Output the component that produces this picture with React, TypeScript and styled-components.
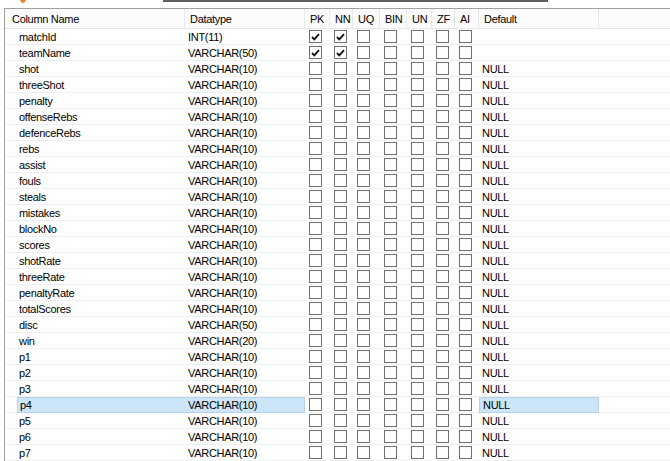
import React from "react";
import styled, { createGlobalStyle, css } from "styled-components";

const Global = createGlobalStyle`
  html, body { margin: 0; padding: 0; background: #ffffff; }
  body { font-family: "Liberation Sans", Arial, sans-serif; font-size: 11px; color: #000; overflow: hidden; }
`;

const COLS = "12px 168px 120px 25px 23px 27px 27px 25px 23px 24px 120px 1fr";

const Page = styled.div`
  width: 670px;
  height: 461px;
  display: flex;
  flex-direction: column;
  overflow: hidden;
`;

const TopStrip = styled.div`
  height: 8px;
  display: flex;
  align-items: flex-start;
`;

const ToolIcon = styled.svg`
  margin-left: 19px;
  width: 8px;
  height: 4px;
  display: block;
`;

const ToolLine = styled.div`
  margin-left: 136px;
  width: 385px;
  height: 2px;
  background: #5f5f5f;
`;

const Panel = styled.div`
  margin-left: 4px;
  border-top: 1px solid #a0a0a0;
  border-left: 1px solid #a0a0a0;
  flex: 1;
  display: flex;
  flex-direction: column;
`;

const HeaderRow = styled.div`
  display: grid;
  grid-template-columns: ${COLS};
  height: 20px;
  box-sizing: border-box;
  border-bottom: 1px solid #e5e5e5;
  background: #fcfcfd;
`;

const HeadCell = styled.div<{ $span?: number; $pad?: number; $last?: boolean }>`
  grid-column: span ${(p) => p.$span ?? 1};
  padding-left: ${(p) => p.$pad ?? 5}px;
  padding-top: 1px;
  line-height: 18px;
  letter-spacing: -0.3px;
  white-space: nowrap;
  overflow: hidden;
  ${(p) => !p.$last && css`border-right: 1px solid #e3e9f1;`}
`;

const Row = styled.div`
  display: grid;
  grid-template-columns: ${COLS};
  height: 16px;
  box-sizing: border-box;
  border-bottom: 1px solid #f0f0f0;
`;

const selBorder = "#b4d2ee";
const selFill = "#cde5f8";

const Cell = styled.div<{ $pad?: number; $sel?: "left" | "right" | "full" }>`
  padding-left: ${(p) => p.$pad ?? 3}px;
  padding-top: 1px;
  line-height: 14px;
  letter-spacing: -0.3px;
  white-space: nowrap;
  overflow: hidden;
  box-sizing: border-box;
  ${(p) =>
    p.$sel &&
    css`
      background: ${selFill};
      border-top: 1px solid ${selBorder};
      border-bottom: 1px solid ${selBorder};
      padding-top: 0px;
      line-height: 14px;
      margin-bottom: -1px;
    `}
  ${(p) => (p.$sel === "left" || p.$sel === "full") && css`border-left: 1px solid ${selBorder};`}
  ${(p) => (p.$sel === "right" || p.$sel === "full") && css`border-right: 1px solid ${selBorder};`}
`;

const BoxCell = styled.div`
  padding-left: 4px;
  padding-top: 1px;
`;

const Box = styled.div`
  width: 13px;
  height: 13px;
  box-sizing: border-box;
  border: 1px solid #6f6f6f;
  background: #fff;
  display: flex;
  align-items: center;
  justify-content: center;
`;

const Check = () => (
  <svg width="9" height="8" viewBox="0 0 9 8">
    <path d="M1 4 L3.3 6.3 L8 1.2" fill="none" stroke="#111" strokeWidth="1.9" />
  </svg>
);

type Col = { name: string; type: string; pk?: boolean; nn?: boolean; def?: string };

const columns: Col[] = [
  { name: "matchId", type: "INT(11)", pk: true, nn: true, def: "" },
  { name: "teamName", type: "VARCHAR(50)", pk: true, nn: true, def: "" },
  ...[
    ["shot", "10"], ["threeShot", "10"], ["penalty", "10"], ["offenseRebs", "10"],
    ["defenceRebs", "10"], ["rebs", "10"], ["assist", "10"], ["fouls", "10"],
    ["steals", "10"], ["mistakes", "10"], ["blockNo", "10"], ["scores", "10"],
    ["shotRate", "10"], ["threeRate", "10"], ["penaltyRate", "10"], ["totalScores", "10"],
    ["disc", "50"], ["win", "20"], ["p1", "10"], ["p2", "10"], ["p3", "10"],
    ["p4", "10"], ["p5", "10"], ["p6", "10"], ["p7", "10"],
  ].map(([n, l]) => ({ name: n, type: `VARCHAR(${l})`, def: "NULL" })),
];

const flags = ["PK", "NN", "UQ", "BIN", "UN", "ZF", "AI"];

export default function App() {
  return (
    <Page>
      <Global />
      <TopStrip>
        <ToolIcon viewBox="0 0 8 4">
          <path d="M1 0 L7 0 L6 2 Q4 4 2 2 Z" fill="#e8892a" />
        </ToolIcon>
        <ToolLine />
      </TopStrip>
      <Panel>
        <HeaderRow>
          <HeadCell $span={2} $pad={7}>Column Name</HeadCell>
          <HeadCell>Datatype</HeadCell>
          {flags.map((f) => (
            <HeadCell key={f}>{f}</HeadCell>
          ))}
          <HeadCell>Default</HeadCell>
          <HeadCell $last />
        </HeaderRow>
        {columns.map((c) => {
          const sel = c.name === "p4";
          return (
            <Row key={c.name}>
              <div />
              <Cell $pad={2} $sel={sel ? "left" : undefined}>{c.name}</Cell>
              <Cell $sel={sel ? "right" : undefined}>{c.type}</Cell>
              {flags.map((f, i) => (
                <BoxCell key={f}>
                  <Box>{(i === 0 && c.pk) || (i === 1 && c.nn) ? <Check /> : null}</Box>
                </BoxCell>
              ))}
              <Cell $pad={3} $sel={sel ? "full" : undefined}>{c.def}</Cell>
              <div />
            </Row>
          );
        })}
      </Panel>
    </Page>
  );
}
